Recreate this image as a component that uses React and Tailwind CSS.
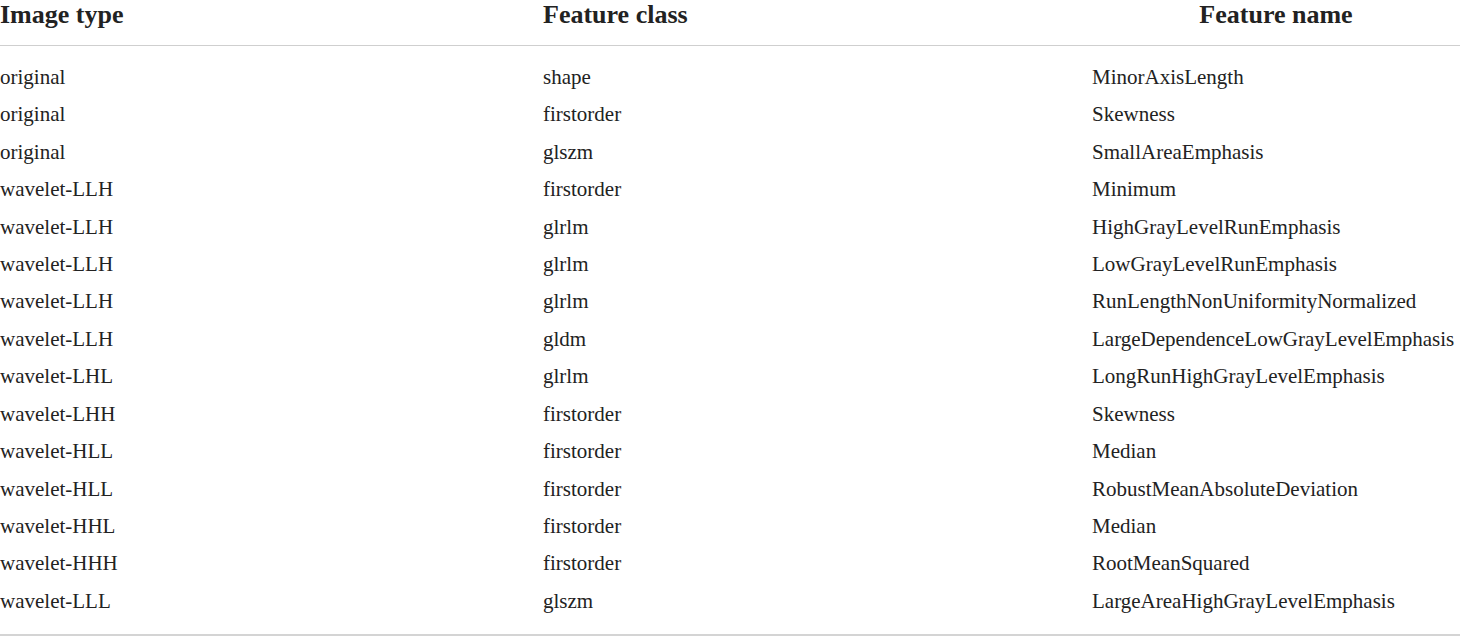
const rows = [
  ["original", "shape", "MinorAxisLength"],
  ["original", "firstorder", "Skewness"],
  ["original", "glszm", "SmallAreaEmphasis"],
  ["wavelet-LLH", "firstorder", "Minimum"],
  ["wavelet-LLH", "glrlm", "HighGrayLevelRunEmphasis"],
  ["wavelet-LLH", "glrlm", "LowGrayLevelRunEmphasis"],
  ["wavelet-LLH", "glrlm", "RunLengthNonUniformityNormalized"],
  ["wavelet-LLH", "gldm", "LargeDependenceLowGrayLevelEmphasis"],
  ["wavelet-LHL", "glrlm", "LongRunHighGrayLevelEmphasis"],
  ["wavelet-LHH", "firstorder", "Skewness"],
  ["wavelet-HLL", "firstorder", "Median"],
  ["wavelet-HLL", "firstorder", "RobustMeanAbsoluteDeviation"],
  ["wavelet-HHL", "firstorder", "Median"],
  ["wavelet-HHH", "firstorder", "RootMeanSquared"],
  ["wavelet-LLL", "glszm", "LargeAreaHighGrayLevelEmphasis"],
];

export default function App() {
  return (
    <div className="w-[1460px] h-[636px] bg-white text-[#222] overflow-hidden" style={{ fontFamily: '"Liberation Serif", serif' }}>
      <div className="grid grid-cols-[543px_549px_368px] h-[46px] items-start border-b border-[#cfcfcf] font-bold text-[26px] leading-[29px]">
        <div>Image type</div>
        <div>Feature class</div>
        <div className="text-center">Feature name</div>
      </div>
      <div className="pt-[13px] pb-[14px] border-b-2 border-[#d4d4d4] text-[21px]">
        {rows.map((r, i) => (
          <div key={i} className="grid grid-cols-[543px_549px_368px] h-[37.43px] items-center whitespace-nowrap">
            <div>{r[0]}</div>
            <div>{r[1]}</div>
            <div>{r[2]}</div>
          </div>
        ))}
      </div>
    </div>
  );
}
